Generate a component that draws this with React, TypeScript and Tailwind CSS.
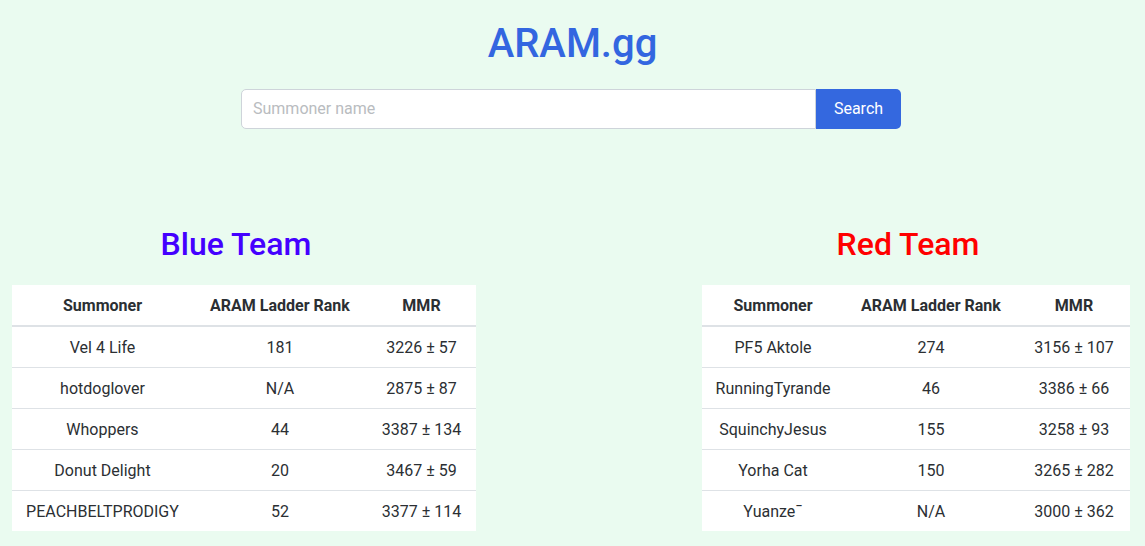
import React from "react";

type Row = [string, string, string];

const blue: Row[] = [
  ["Vel 4 Life", "181", "3226 ± 57"],
  ["hotdoglover", "N/A", "2875 ± 87"],
  ["Whoppers", "44", "3387 ± 134"],
  ["Donut Delight", "20", "3467 ± 59"],
  ["PEACHBELTPRODIGY", "52", "3377 ± 114"],
];

const red: Row[] = [
  ["PF5 Aktole", "274", "3156 ± 107"],
  ["RunningTyrande", "46", "3386 ± 66"],
  ["SquinchyJesus", "155", "3258 ± 93"],
  ["Yorha Cat", "150", "3265 ± 282"],
  ["Yuanze\u00AF", "N/A", "3000 ± 362"],
];

function TeamTable({ rows, wide }: { rows: Row[]; wide: boolean }) {
  return (
    <table
      className={`bg-white border-collapse table-fixed text-[16px] text-[#2b2f33] text-center whitespace-nowrap ${
        wide ? "w-[464px] min-w-[464px]" : "w-[428px] min-w-[428px]"
      }`}
    >
      <colgroup>
        <col className={wide ? "w-[181px]" : "w-[142px]"} />
        <col className="w-[174px]" />
        <col className={wide ? "w-[109px]" : "w-[112px]"} />
      </colgroup>
      <thead>
        <tr className="h-[41px] border-b-2 border-[#dee2e6]">
          <th className="px-0 pt-[2px] font-bold">Summoner</th>
          <th className="px-0 pt-[2px] font-bold">ARAM Ladder Rank</th>
          <th className="px-0 pt-[2px] font-bold">MMR</th>
        </tr>
      </thead>
      <tbody>
        {rows.map((r, i) => (
          <tr key={i} className={`h-[41px] ${i < rows.length - 1 ? "border-b border-[#dee2e6]" : ""}`}>
            <td className="px-0 pt-[2px]">{r[0]}</td>
            <td className="px-0 pt-[2px]">{r[1]}</td>
            <td className="px-0 pt-[2px]">{r[2]}</td>
          </tr>
        ))}
      </tbody>
    </table>
  );
}

export default function App() {
  return (
    <div
      className="min-h-[546px] bg-[#eafbf0] overflow-hidden"
      style={{ fontFamily: "Roboto, Inter, 'Noto Sans', sans-serif" }}
    >
      <h1 className="pt-[20px] text-center text-[40px] leading-[48px] font-medium text-[#3366e0]">ARAM.gg</h1>
      <div className="mt-[21px] flex justify-center pr-[3px]">
        <div className="flex w-[660px] h-[40px]">
          <input
            className="flex-1 bg-white border border-[#ced4da] rounded-l-[5px] px-[11px] text-[16px] text-[#212529] placeholder:text-[#b9bcc0] outline-none"
            placeholder="Summoner name"
          />
          <button className="w-[85px] bg-[#3468df] text-white text-[16px] rounded-r-[5px]">Search</button>
        </div>
      </div>
      <div className="mt-[96px] flex pl-3">
        <div className="w-[448px] shrink-0">
          <h2 className="text-center text-[32px] leading-[38px] font-medium text-[#4400ff]">Blue Team</h2>
          <div className="mt-[22px]">
            <TeamTable rows={blue} wide={true} />
          </div>
        </div>
        <div className="w-[412px] shrink-0 ml-[242px]">
          <h2 className="text-center text-[32px] leading-[38px] font-medium text-[#ff0000]">Red Team</h2>
          <div className="mt-[22px]">
            <TeamTable rows={red} wide={false} />
          </div>
        </div>
      </div>
    </div>
  );
}
